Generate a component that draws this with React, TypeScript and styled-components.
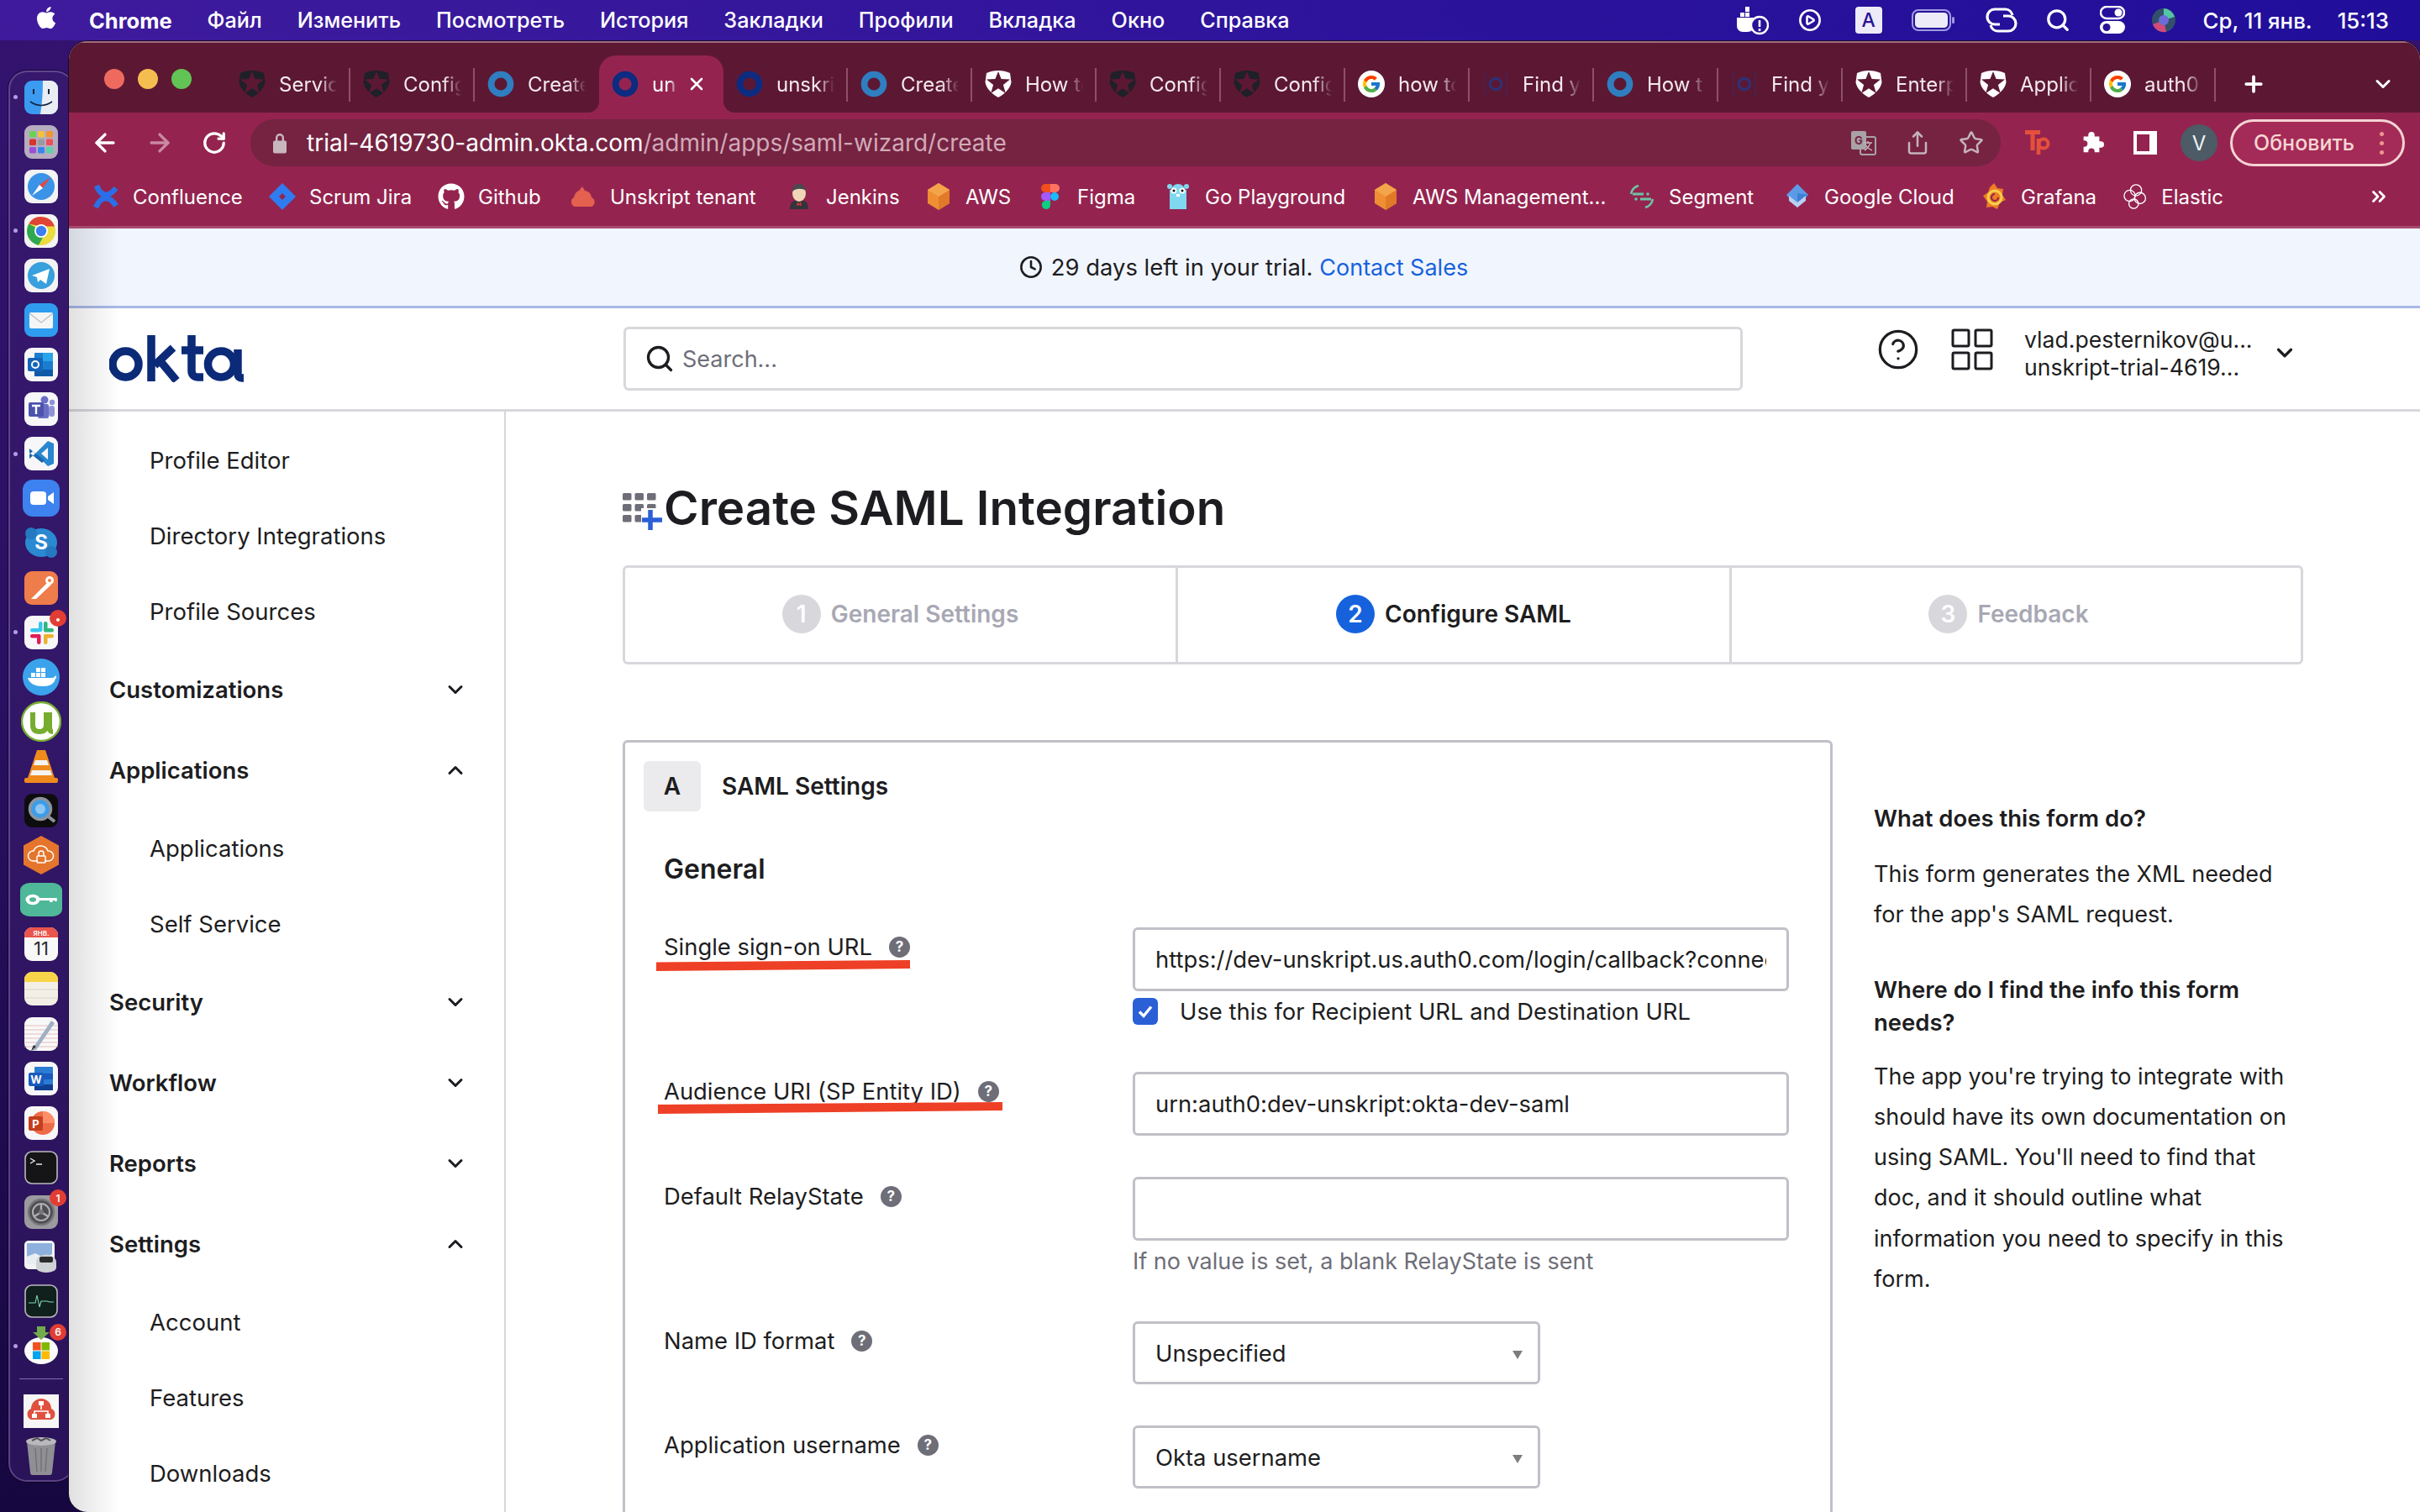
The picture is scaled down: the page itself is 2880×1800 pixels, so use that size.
import React from "react";
import styled, { createGlobalStyle } from "styled-components";
import { FaApple, FaGithub } from "react-icons/fa";
import { FcGoogle } from "react-icons/fc";
import {
  ArrowLeft,
  ArrowRight,
  RotateCw,
  Share,
  Star,
  ChevronDown,
  ChevronUp,
  ChevronsRight,
  Plus,
  X,
  Search,
  CirclePlay,
  HelpCircle,
  Clock,
} from "lucide-react";

const Global = createGlobalStyle`
  html, body { margin: 0; padding: 0; width: 2880px; height: 1800px; overflow: hidden; }
  body { font-family: Inter, "Noto Sans", sans-serif; color: #1d1d21; }
  * { box-sizing: border-box; }
`;

const UI = `Inter, "Noto Sans", sans-serif`;

const Page = styled.div`
  width: 2880px;
  height: 1800px;
  display: flex;
  flex-direction: column;
  overflow: hidden;
  background: linear-gradient(180deg, #33136f 0%, #2a1062 45%, #160740 100%);
`;

/* ---------- macOS menu bar ---------- */
const MenuBar = styled.header`
  height: 48px;
  flex: none;
  display: flex;
  align-items: center;
  padding-left: 40px;
  background: linear-gradient(90deg, #3f1b9c 0%, #2f149c 50%, #200e9a 100%);
  color: #fff;
  font-family: ${UI};
  font-size: 25.2px;
`;
const AppleSlot = styled.span`
  width: 66px;
  display: flex;
  font-size: 30px;
  margin-top: -6px;
`;
const MenuList = styled.nav`
  display: flex;
  gap: 42px;
`;
const MenuItem = styled.span<{ $bold?: boolean }>`
  font-weight: ${(p) => (p.$bold ? 700 : 500)};
  font-size: ${(p) => (p.$bold ? "25.5px" : "inherit")};
  white-space: nowrap;
`;
const StatusArea = styled.div`
  margin-left: auto;
  display: flex;
  align-items: center;
  padding-right: 37px;
`;
const StatusSlot = styled.span<{ $w: number }>`
  width: ${(p) => p.$w}px;
  display: flex;
  justify-content: center;
  align-items: center;
`;
const KeyboardBadge = styled.span`
  width: 32px;
  height: 32px;
  border-radius: 4px;
  background: #ecebf7;
  color: #2a1296;
  font-size: 23px;
  font-weight: 500;
  display: flex;
  align-items: center;
  justify-content: center;
`;
const DateText = styled.span`
  margin-left: 23px;
  font-weight: 500;
  font-size: 25.8px;
  white-space: nowrap;
  display: flex;
  gap: 30px;
`;

/* ---------- desktop ---------- */
const Desktop = styled.div`
  flex: 1;
  min-height: 0;
  display: flex;
`;

const DockRail = styled.aside`
  flex: none;
  width: 78px;
  margin: 36px -6px 36px 10px;
  padding-top: 3px;
  display: flex;
  flex-direction: column;
  align-items: center;
  background: rgba(58, 30, 110, 0.55);
  border: 2px solid rgba(150, 125, 190, 0.45);
  border-radius: 22px;
  box-shadow: 0 0 0 1px rgba(0, 0, 0, 0.5);
`;
const DockSlot = styled.div`
  position: relative;
  flex: 0 0 53.1px;
  width: 100%;
  display: flex;
  align-items: center;
  justify-content: center;
`;
const RunDot = styled.span`
  position: absolute;
  left: 4px;
  top: 24px;
  width: 5px;
  height: 5px;
  border-radius: 50%;
  background: #b39be6;
`;
const DockBadge = styled.span`
  position: absolute;
  right: 7px;
  top: 0;
  width: 20px;
  height: 20px;
  border-radius: 50%;
  background: #e13d33;
  color: #fff;
  font-size: 12px;
  font-weight: 600;
  display: flex;
  align-items: center;
  justify-content: center;
`;
const DockDivider = styled.hr`
  width: 52px;
  height: 1px;
  flex: none;
  border: 0;
  margin: 12px 0 12px;
  background: rgba(190, 170, 225, 0.6);
`;

const Window = styled.main`
  position: relative;
  z-index: 1;
  flex: 1;
  min-width: 0;
  display: flex;
  flex-direction: column;
  border-radius: 22px 22px 0 22px;
  overflow: hidden;
  margin-top: 1px;
  background: #fff;
  box-shadow: 0 0 0 1px #1a0a2a;
`;

/* ---------- tab strip ---------- */
const TabStrip = styled.div`
  flex: none;
  height: 85px;
  display: flex;
  align-items: flex-end;
  background: #5c1833;
  border-top: 2px solid #a06a80;
  color: #f4e9ec;
  font-family: ${UI};
`;
const Lights = styled.div`
  width: 187px;
  flex: none;
  align-self: flex-start;
  display: flex;
  gap: 16px;
  padding: 31px 0 0 42px;
`;
const Light = styled.span<{ $c: string }>`
  width: 24px;
  height: 24px;
  border-radius: 50%;
  background: ${(p) => p.$c};
`;
const TabSlot = styled.div<{ $active?: boolean }>`
  position: relative;
  flex: none;
  width: 148px;
  height: 68px;
  padding-left: 15px;
  display: flex;
  align-items: center;
  gap: 16px;
  font-size: 24px;
  color: ${(p) => (p.$active ? "#fff" : "#f4e9ec")};
  background: ${(p) => (p.$active ? "#94244f" : "transparent")};
  border-radius: ${(p) => (p.$active ? "20px 20px 0 0" : "0")};
  ${(p) =>
    p.$active
      ? `
    &::before, &::after {
      content: ""; position: absolute; bottom: 0; width: 14px; height: 14px;
    }
    &::before { left: -14px; background: radial-gradient(circle at 0 0, transparent 14px, #94244f 14.5px); }
    &::after { right: -14px; background: radial-gradient(circle at 100% 0, transparent 14px, #94244f 14.5px); }
  `
      : ""}
`;
const TabSep = styled.span`
  position: absolute;
  right: 0;
  top: 15px;
  bottom: 13px;
  width: 2px;
  background: #8d5068;
`;
const TabTitle = styled.span<{ $w: number }>`
  width: ${(p) => p.$w}px;
  overflow: hidden;
  white-space: nowrap;
  -webkit-mask-image: linear-gradient(90deg, #000 70%, transparent 100%);
  mask-image: linear-gradient(90deg, #000 70%, transparent 100%);
`;
const TabClose = styled.span`
  position: absolute;
  left: 104px;
  top: 22px;
  display: flex;
`;
const TabTrail = styled.div`
  flex: 1;
  height: 68px;
  display: flex;
  align-items: center;
  padding: 0 30px 0 30px;
  justify-content: space-between;
  color: #fff;
`;

/* ---------- toolbar ---------- */
const Toolbar = styled.div`
  flex: none;
  height: 71px;
  padding: 8px 17px 7px 10px;
  display: flex;
  align-items: center;
  background: #94244f;
  color: #fff;
`;
const NavSlot = styled.span<{ $dim?: boolean }>`
  flex: none;
  width: 65px;
  display: flex;
  justify-content: center;
  color: ${(p) => (p.$dim ? "#c98aa2" : "#fff")};
`;
const Omnibox = styled.div`
  flex: none;
  width: 2083px;
  height: 56px;
  margin-left: 11px;
  padding: 0 3px 0 25px;
  border-radius: 28px;
  background: #752341;
  display: flex;
  align-items: center;
  font-family: ${UI};
  font-size: 28px;
  white-space: nowrap;
`;
const UrlHost = styled.span`
  margin-left: 22px;
  color: #fff;
`;
const UrlPath = styled.span`
  color: #d1aab8;
`;
const OmniActions = styled.div`
  margin-left: auto;
  display: flex;
  color: #c5b3ba;
`;
const ActionSlot = styled.span<{ $c?: string }>`
  flex: none;
  width: 64px;
  display: flex;
  justify-content: center;
  align-items: center;
  color: ${(p) => p.$c || "inherit"};
`;
const ExtGroup = styled.div`
  margin-left: 12px;
  display: flex;
`;
const Avatar = styled.span`
  width: 44px;
  height: 44px;
  border-radius: 50%;
  background: #4c5b66;
  color: #eef2f4;
  font: 400 24px ${UI};
  display: flex;
  align-items: center;
  justify-content: center;
`;
const UpdateButton = styled.button`
  flex: none;
  width: 208px;
  height: 56px;
  margin-left: 5px;
  padding: 0 22px 0 25px;
  border: 3px solid #f5d3d3;
  border-radius: 28px;
  background: #a42b57;
  color: #f7d6d4;
  font: 500 25px ${UI};
  display: flex;
  align-items: center;
  justify-content: space-between;
`;
const KebabDots = styled.span`
  display: flex;
  flex-direction: column;
  gap: 6px;
  & > i {
    display: block;
    width: 5px;
    height: 5px;
    border-radius: 50%;
    background: #f0968f;
  }
`;

/* ---------- bookmarks ---------- */
const BookmarkBar = styled.div`
  flex: none;
  height: 67px;
  padding: 0 36px 6px 28px;
  display: flex;
  align-items: center;
  background: #94244f;
  border-bottom: 3px solid #a84a6e;
  color: #fff;
  font-family: ${UI};
  font-size: 24px;
`;
const Bookmark = styled.span<{ $w: number }>`
  flex: none;
  width: ${(p) => p.$w}px;
  display: flex;
  align-items: center;
  gap: 16px;
  white-space: nowrap;
`;
const BookmarkMore = styled.span`
  margin-left: auto;
  display: flex;
`;

/* ---------- page content ---------- */
const Content = styled.div`
  position: relative;
  flex: 1;
  min-height: 0;
  display: flex;
  flex-direction: column;
  &::after {
    content: "";
    position: absolute;
    inset: 0 auto 0 0;
    width: 60px;
    pointer-events: none;
    background: linear-gradient(90deg, rgba(0, 0, 0, 0.12), rgba(0, 0, 0, 0));
  }
`;
const TrialBanner = styled.div`
  flex: none;
  height: 95px;
  padding-right: 2px;
  display: flex;
  align-items: center;
  justify-content: center;
  gap: 8px;
  background: #f1f5fe;
  border-bottom: 3px solid #a8b8e8;
  font-size: 27.4px;
`;
const ClockSlot = styled.span`
  display: flex;
  margin-right: 2px;
`;
const ContactLink = styled.a`
  color: #1662dd;
  font-size: 27px;
`;
const TopHeader = styled.div`
  flex: none;
  height: 123px;
  display: flex;
  align-items: center;
  border-bottom: 3px solid #d7d7dc;
`;
const LogoSlot = styled.div`
  flex: none;
  width: 660px;
  padding-left: 48px;
  display: flex;
`;
const SearchBox = styled.div`
  flex: none;
  width: 1332px;
  height: 76px;
  padding-left: 22px;
  display: flex;
  align-items: center;
  gap: 9px;
  border: 3px solid #d7d7dc;
  border-radius: 6px;
  color: #6e6e78;
  font-size: 27px;
`;
const HeadIcons = styled.div`
  flex: none;
  margin: 0 0 22px 159px;
  width: 176px;
  display: flex;
  gap: 36px;
  color: #1d1d21;
`;
const UserBlock = styled.div`
  flex: none;
  width: 290px;
  font-size: 26.6px;
  line-height: 33px;
  white-space: nowrap;
  margin-bottom: 12px;
`;
const HeadCaret = styled.span`
  display: flex;
  margin: 0 0 14px 5px;
`;
const Body = styled.div`
  flex: 1;
  min-height: 0;
  display: flex;
`;
const Sidebar = styled.nav`
  flex: none;
  width: 520px;
  padding-top: 13px;
  border-right: 2px solid #d7d7dc;
  display: flex;
  flex-direction: column;
  overflow: hidden;
`;
const SubItem = styled.div`
  flex: none;
  height: 90px;
  padding-left: 96px;
  display: flex;
  align-items: center;
  font-size: 27.5px;
`;
const GroupItem = styled.div`
  flex: none;
  height: 96px;
  padding: 0 44px 0 48px;
  display: flex;
  align-items: center;
  justify-content: space-between;
  font-size: 27.5px;
  font-weight: 600;
`;
const MainPane = styled.div`
  flex: 1;
  min-width: 0;
  padding: 80px 0 0 139px;
  overflow: hidden;
`;
const PageTitle = styled.h1`
  margin: 0;
  height: 70px;
  display: flex;
  align-items: center;
  font-size: 56.5px;
  font-weight: 600;
  line-height: 70px;
  white-space: nowrap;
`;
const TitleIcon = styled.span`
  width: 49px;
  display: flex;
  margin-top: 12px;
`;
const Wizard = styled.div`
  width: 2000px;
  height: 118px;
  margin-top: 33px;
  display: flex;
  border: 3px solid #d7d7dc;
  border-radius: 6px;
`;
const WizardStep = styled.div<{ $w: number; $on?: boolean; $shift?: number }>`
  flex: none;
  width: ${(p) => p.$w}px;
  padding: 0 ${(p) => p.$shift || 0}px 2px 0;
  display: flex;
  align-items: center;
  justify-content: center;
  gap: 12px;
  font-size: 28px;
  font-weight: 600;
  color: ${(p) => (p.$on ? "#1d1d21" : "#a8a8b4")};
  &:not(:last-child) {
    border-right: 3px solid #d7d7dc;
  }
`;
const StepNum = styled.span<{ $on?: boolean }>`
  width: 46px;
  height: 46px;
  border-radius: 50%;
  background: ${(p) => (p.$on ? "#1662dd" : "#d7d7dc")};
  color: #fff;
  display: flex;
  align-items: center;
  justify-content: center;
`;
const Columns = styled.div`
  margin-top: 90px;
  display: flex;
  align-items: flex-start;
`;
const Card = styled.section`
  flex: none;
  width: 1440px;
  height: 1100px;
  padding: 22px 22px 0;
  border: 3px solid #c0c0c8;
  border-radius: 6px;
`;
const CardHead = styled.div`
  display: flex;
  align-items: center;
  gap: 25px;
  font-size: 28px;
  font-weight: 600;
`;
const CardLetter = styled.span`
  width: 68px;
  height: 60px;
  border-radius: 6px;
  background: #ebebed;
  display: flex;
  align-items: center;
  justify-content: center;
`;
const SectionTitle = styled.h2`
  margin: 49px 0 49px 24px;
  font-size: 32px;
  font-weight: 600;
  line-height: 40px;
`;
const FormGrid = styled.div`
  margin-left: 24px;
  display: grid;
  grid-template-columns: 558px 781px;
  row-gap: 49px;
  font-size: 27.4px;
`;
const LabelCell = styled.div`
  position: relative;
  height: 46px;
  display: flex;
  align-items: center;
  gap: 20px;
  white-space: nowrap;
`;
const HelpDot = styled.span`
  width: 25px;
  height: 25px;
  border-radius: 50%;
  background: #6e6e78;
  color: #fff;
  font-size: 17px;
  font-weight: 700;
  display: flex;
  align-items: center;
  justify-content: center;
`;
const RedMark = styled.svg<{ $l: number; $t: number }>`
  position: absolute;
  left: ${(p) => p.$l}px;
  top: ${(p) => p.$t}px;
`;
const FieldCell = styled.div`
  display: flex;
  flex-direction: column;
`;
const TextBox = styled.div`
  width: 781px;
  height: 76px;
  padding: 0 24px;
  border: 3px solid #c0c0c8;
  border-radius: 6px;
  display: flex;
  align-items: center;
  overflow: hidden;
  white-space: nowrap;
`;
const UrlClip = styled.span`
  width: 730px;
  overflow: hidden;
  white-space: nowrap;
`;
const CheckRow = styled.label`
  height: 46px;
  margin-top: 1px;
  display: flex;
  align-items: center;
  gap: 26px;
`;
const CheckMark = styled.span`
  width: 30px;
  height: 32px;
  border-radius: 6px;
  background: #2a5fd6;
  display: flex;
  align-items: center;
  justify-content: center;
`;
const Hint = styled.div`
  height: 46px;
  margin-top: 1px;
  display: flex;
  align-items: center;
  color: #6e6e78;
  font-size: 27px;
`;
const SelectBox = styled.div`
  width: 485px;
  height: 75px;
  padding: 0 18px 0 24px;
  border: 3px solid #c0c0c8;
  border-radius: 6px;
  display: flex;
  align-items: center;
  justify-content: space-between;
`;
const SelectArrow = styled.span`
  width: 0;
  height: 0;
  border-left: 6px solid transparent;
  border-right: 6px solid transparent;
  border-top: 10px solid #7d7d7d;
  margin-top: 4px;
`;
const HelpAside = styled.aside`
  flex: none;
  width: 520px;
  margin-left: 49px;
  padding-top: 74px;
  font-size: 27px;
`;
const HelpTitle = styled.h3<{ $gap: number }>`
  margin: ${(p) => p.$gap}px 0 0;
  font-size: 27.5px;
  font-weight: 600;
  line-height: 39px;
`;
const HelpText = styled.p<{ $gap: number }>`
  margin: ${(p) => p.$gap}px 0 0;
  line-height: 48.1px;
`;

/* ---------- brand drawings ---------- */
const Auth0 = ({ fg, star }: { fg: string; star: string }) => (
  <svg width="32" height="32" viewBox="0 0 32 32">
    <path d="M16 0c5 0 10 1 14 3l1.5 11C30 22 23 28 16 32 9 28 2 22 .5 14L2 3c4-2 9-3 14-3z" fill={fg} />
    <polygon
      points="16,1 19.6,10 30,10.4 21.9,16.9 24.8,27 16,21.2 7.2,27 10.1,16.9 2,10.4 12.4,10"
      fill={star}
    />
  </svg>
);
const OktaRing = ({ c, faint }: { c: string; faint?: boolean }) => (
  <svg width="32" height="32" viewBox="0 0 24 24" opacity={faint ? 0.75 : 1}>
    <circle cx="12" cy="12" r={faint ? 5 : 8.6} fill="none" stroke={c} strokeWidth={faint ? 2.5 : 5.8} />
    {faint && <path d="M4 2h-2v20h2M20 2h2v20h-2" fill="none" stroke={c} strokeWidth="1" opacity=".5" />}
  </svg>
);
const GoogleFav = () => (
  <svg width="32" height="32" viewBox="0 0 32 32">
    <circle cx="16" cy="16" r="16" fill="#fff" />
    <FcGoogle x={4} y={4} size={24} />
  </svg>
);
const OktaLogo = () => (
  <svg width="160" height="56" viewBox="0 0 160 56" fill="none" stroke="#0b2a78" strokeWidth="9.5">
    <circle cx="19.5" cy="34.5" r="15.5" />
    <path d="M50 0v55M54 36 76 15M60 30 80 54" />
    <path d="M98 0v42q0 8 8 8h6M86 18h26" />
    <circle cx="133" cy="34.5" r="15.5" />
    <path d="M153 17v29q0 5 5 5h2" />
  </svg>
);
const TitleGlyph = () => (
  <svg width="48" height="48" viewBox="0 0 48 48">
    <g fill="#6e6e78">
      {[0, 14.5, 29].map((x) =>
        [0, 13, 26].map((y) => <rect key={`${x}-${y}`} x={x} y={y} width="10.5" height="8.5" rx="1.5" />)
      )}
    </g>
    <rect x="22" y="18" width="30" height="30" fill="#fff" />
    <path d="M33 20v24M23 32h24" stroke="#2a5fd6" strokeWidth="5.5" />
  </svg>
);

const sq = "0 0 40 40";
const Tile = ({ bg, children }: { bg: string; children?: React.ReactNode }) => (
  <>
    <rect width="40" height="40" rx="9" fill={bg} />
    {children}
  </>
);
const S: React.FC<{ w?: number; children: React.ReactNode }> = ({ w = 40, children }) => (
  <svg width={w} height="40" viewBox={sq} preserveAspectRatio="none">
    {children}
  </svg>
);

const dockItems: { key: string; dot?: boolean; badge?: string; art: React.ReactNode }[] = [
  { key: "finder", dot: true, art: (
    <S><Tile bg="#3a9bf0" /><path d="M22 0h9a9 9 0 0 1 9 9v22a9 9 0 0 1-9 9H19q3-18 3-40z" fill="#e9eef5" /><path d="M7 25q13 9 26 0" stroke="#13253f" strokeWidth="1.6" fill="none" /><path d="M11 10v6M29 10v6" stroke="#13253f" strokeWidth="2" /></S>
  )},
  { key: "launchpad", art: (
    <S><Tile bg="#b7acc0" />{["#69d354","#f4c23c","#f39433","#d8352a","#9b9b9f","#ec4f5a","#9a50d6","#3a84f0","#5ed2a8"].map((c, i) => <rect key={c} x={6 + (i % 3) * 10} y={7 + Math.floor(i / 3) * 9.5} width="8" height="7.5" rx="1.5" fill={c} />)}</S>
  )},
  { key: "safari", art: (
    <S><Tile bg="#f3f3f5" /><circle cx="20" cy="20" r="16" fill="#3b93e8" /><path d="M31 9 22 22 18 18z" fill="#e9463a" /><path d="M9 31l9-13 4 4z" fill="#fff" /></S>
  )},
  { key: "chrome", dot: true, art: (
    <S><Tile bg="#f3f3f5" /><circle cx="20" cy="20" r="17" fill="#eadb3f" /><path d="M5.3 11.5A17 17 0 0 1 36 14.5H20z" fill="#df4437" /><path d="M5.3 11.5A17 17 0 0 0 17 36.7L25 22z" fill="#2fa84f" /><circle cx="20" cy="20" r="8" fill="#fff" /><circle cx="20" cy="20" r="6.2" fill="#3d7ff0" /></S>
  )},
  { key: "telegram", art: (
    <S><Tile bg="#f3f3f5" /><circle cx="20" cy="20" r="16" fill="#38a0dc" /><path d="M9 20 30 12l-4 18-7-5-3 3-1-6z" fill="#fff" /></S>
  )},
  { key: "mail", art: (
    <S><Tile bg="#2f9cf0" /><rect x="6" y="11" width="28" height="19" rx="2" fill="#f5f5f5" /><path d="M6 12l14 11 14-11" stroke="#bcbcc2" strokeWidth="1.2" fill="none" /></S>
  )},
  { key: "outlook", art: (
    <S><Tile bg="#f7f7f9" /><rect x="12" y="6" width="22" height="28" rx="1" fill="#1a7dd0" /><path d="M22 6h12v10H22z" fill="#2aa3e8" /><path d="M12 26h22v8H12z" fill="#0e5aa8" /><rect x="4" y="12" width="18" height="16" rx="2" fill="#1464ba" /><circle cx="13" cy="20" r="4" fill="none" stroke="#fff" strokeWidth="2" /></S>
  )},
  { key: "teams", art: (
    <S><Tile bg="#f7f7f9" /><circle cx="24" cy="9" r="4.5" fill="#6a6fc5" /><circle cx="33" cy="12" r="3.2" fill="#8f93d6" /><rect x="16" y="14" width="13" height="17" rx="2" fill="#6a6fc5" /><rect x="29" y="16" width="7" height="13" rx="3" fill="#8f93d6" /><rect x="5" y="12" width="18" height="17" rx="2" fill="#4b53ad" /><path d="M9 16h10M14 16v10" stroke="#fff" strokeWidth="2.4" /></S>
  )},
  { key: "vscode", dot: true, art: (
    <S><Tile bg="#f7f7f9" /><path d="M28 5 13 20l15 15 7-3V8z" fill="#2a86d0" /><path d="M28 13 20 20l8 7z" fill="#f7f7f9" /><path d="M6 14l18 14-3 3-15-12zM6 26l7-6-3-3-4 4z" fill="#1a68ad" /></S>
  )},
  { key: "zoom", art: (
    <svg width="44" height="44" viewBox="0 0 44 44"><rect width="44" height="44" rx="12" fill="#3d82ef" /><rect x="9" y="14" width="19" height="16" rx="4" fill="#fff" /><path d="M30 20l7-5v14l-7-5z" fill="#fff" /></svg>
  )},
  { key: "skype", art: (
    <S><ellipse cx="20" cy="20" rx="19" ry="17" fill="#2a89d1" /><circle cx="8" cy="9" r="7" fill="#2479c0" /><circle cx="32" cy="31" r="7" fill="#2479c0" /><text x="20" y="28" fontSize="24" fontWeight="700" fill="#fff" textAnchor="middle" fontFamily="Inter, sans-serif">S</text></S>
  )},
  { key: "postman", art: (
    <S><Tile bg="#ef7c4b" /><path d="M8 33 28 13l4 3-18 17z" fill="#fff" /><circle cx="30" cy="11" r="5" fill="#fff" /><circle cx="30" cy="11" r="2" fill="#ef7c4b" /></S>
  )},
  { key: "slack", dot: true, badge: "•", art: (
    <S><Tile bg="#f7f7f9" /><rect x="7" y="15" width="12" height="4.5" rx="2.2" fill="#36c5f0" /><rect x="17" y="7" width="4.5" height="12" rx="2.2" fill="#36c5f0" /><rect x="23" y="7" width="4.5" height="12" rx="2.2" fill="#2eb67d" /><rect x="23" y="15" width="12" height="4.5" rx="2.2" fill="#2eb67d" /><rect x="23" y="22" width="12" height="4.5" rx="2.2" fill="#ecb22e" /><rect x="23" y="22" width="4.5" height="12" rx="2.2" fill="#ecb22e" /><rect x="7" y="22" width="12" height="4.5" rx="2.2" fill="#e01e5a" /><rect x="15" y="22" width="4.5" height="12" rx="2.2" fill="#e01e5a" /></S>
  )},
  { key: "docker", art: (
    <svg width="44" height="44" viewBox="0 0 44 44"><circle cx="22" cy="22" r="22" fill="#3aa3ec" /><path d="M6 23h29q3 0 4-3 2 2 0 4-2 9-15 9Q9 33 6 23z" fill="#fff" /><path d="M10 17h5v5h-5zM16 17h5v5h-5zM22 17h5v5h-5zM16 11h5v5h-5zM22 11h5v5h-5z" fill="#fff" /></svg>
  )},
  { key: "utorrent", art: (
    <svg width="48" height="48" viewBox="0 0 48 48"><circle cx="24" cy="24" r="23" fill="#fff" stroke="#76ad2f" strokeWidth="2.4" /><path d="M14 13v15q0 8 8 8t8-8V13M34 13v19q0 4 4 4" fill="none" stroke="#76ad2f" strokeWidth="6" /></svg>
  )},
  { key: "vlc", art: (
    <svg width="42" height="42" viewBox="0 0 42 42"><path d="M16 2h10l12 36H4z" fill="#ef8a1d" /><path d="M14 14h14l2 6H12zM10 26h22l2 6H8z" fill="#f4f4f4" /><rect x="1" y="35" width="40" height="6" rx="2" fill="#ef8a1d" /></svg>
  )},
  { key: "quicktime", art: (
    <S><Tile bg="#0d0d0f" /><circle cx="19" cy="18" r="12.5" fill="#3d9de8" stroke="#8f949c" strokeWidth="3.5" /><circle cx="19" cy="18" r="6" fill="#8ec7f2" /><path d="M27 26l9 7" stroke="#8f949c" strokeWidth="4" /></S>
  )},
  { key: "hex", art: (
    <svg width="46" height="46" viewBox="0 0 46 46"><path d="M23 0 44 11.5v23L23 46 2 34.5v-23z" fill="#e5752c" /><path d="M13 30a6 6 0 0 1 1-12 9 9 0 0 1 17 0 6 6 0 0 1 1 12h-5M19 30h-6" fill="none" stroke="#fff" strokeWidth="1.5" /><rect x="18" y="24" width="10" height="8" rx="1" fill="none" stroke="#fff" strokeWidth="1.5" /><path d="M20 24v-3a3 3 0 0 1 6 0v3" fill="none" stroke="#fff" strokeWidth="1.5" /></svg>
  )},
  { key: "key", art: (
    <S w={50}><rect width="40" height="40" rx="9" fill="#4fb898" /><ellipse cx="12" cy="20" rx="5" ry="4.5" fill="none" stroke="#fff" strokeWidth="3.6" /><path d="M17 18h18v4h-2v-1h-2v2h-3v-2H17z" fill="#fff" /></S>
  )},
  { key: "calendar", art: (
    <S><Tile bg="#f8f8f8" /><path d="M9 0h22a9 9 0 0 1 9 9v3H0V9a9 9 0 0 1 9-9z" fill="#e9544c" /><text x="20" y="9.5" fontSize="8" fontWeight="600" fill="#fff" textAnchor="middle" fontFamily="Inter, sans-serif">ЯНВ.</text><text x="20" y="33" fontSize="22" fill="#2a2a2e" textAnchor="middle" fontFamily="Inter, sans-serif">11</text></S>
  )},
  { key: "notes", art: (
    <S><Tile bg="#f3efe6" /><path d="M9 0h22a9 9 0 0 1 9 9v3H0V9a9 9 0 0 1 9-9z" fill="#f8d548" /><path d="M0 21h40M0 31h40" stroke="#d9d5cb" strokeWidth="1" /></S>
  )},
  { key: "textedit", art: (
    <S><Tile bg="#f8f8f8" /><path d="M0 10h40M0 15h40M0 20h40M0 25h40M0 30h40M0 35h40" stroke="#e1a5a5" strokeWidth=".7" /><path d="M8 40 32 4l4 3-22 32z" fill="#9fb1c4" /><path d="M8 40l3-7 3 2z" fill="#333" /></S>
  )},
  { key: "word", art: (
    <S><Tile bg="#f7f7f9" /><rect x="12" y="6" width="22" height="28" rx="1" fill="#2b7cd3" /><path d="M12 14h22v7H12z" fill="#185abd" /><path d="M12 27h22v7H12z" fill="#103f91" /><rect x="5" y="13" width="18" height="16" rx="2" fill="#185abd" /><text x="14" y="26" fontSize="13" fontWeight="700" fill="#fff" textAnchor="middle" fontFamily="Inter, sans-serif">W</text></S>
  )},
  { key: "ppt", art: (
    <S><Tile bg="#f7f7f9" /><circle cx="22" cy="20" r="14" fill="#ed6c47" /><path d="M22 6a14 14 0 0 1 14 14H22z" fill="#ff8f6b" /><rect x="5" y="12" width="17" height="17" rx="2" fill="#c43e1c" /><text x="13.5" y="25.5" fontSize="13" fontWeight="700" fill="#fff" textAnchor="middle" fontFamily="Inter, sans-serif">P</text></S>
  )},
  { key: "terminal", art: (
    <S><rect x="1" y="1" width="38" height="38" rx="8" fill="#151517" stroke="#b9b9bd" strokeWidth="1.6" /><path d="M7 9l5 3-5 3M14 16h7" stroke="#e8e8e8" strokeWidth="1.4" fill="none" /></S>
  )},
  { key: "settings", badge: "1", art: (
    <S><Tile bg="#9b9b9f" /><circle cx="20" cy="20" r="15" fill="#4d4d52" stroke="#77777c" strokeWidth="2.5" /><circle cx="20" cy="20" r="10" fill="none" stroke="#b0b0b4" strokeWidth="2" /><path d="M20 20v-9M20 20l8 5M20 20l-8 5" stroke="#b0b0b4" strokeWidth="2.4" /><circle cx="20" cy="20" r="3" fill="#77777c" /></S>
  )},
  { key: "preview", art: (
    <S><rect x="0" y="1" width="36" height="34" rx="5" fill="#f3f3f5" /><path d="M3 4h30v16H3z" fill="#8eb0dd" /><path d="M3 20l10-4 10 5 10-4v12H3z" fill="#e9eef2" /><path d="M14 27a10 8 0 0 1 24 0v6a12 6 0 0 1-24 0z" fill="#cfd2d4" /><rect x="18" y="20" width="16" height="7" rx="2" fill="#2b2b2e" /></S>
  )},
  { key: "activity", art: (
    <S><rect x="1" y="1" width="38" height="38" rx="8" fill="#10201c" stroke="#b9b9bd" strokeWidth="1.6" /><path d="M5 22h8l2-9 3 14 2-7h7l3 1h5" stroke="#7fd8b4" strokeWidth="1.1" fill="none" /></S>
  )},
  { key: "msupdate", dot: true, badge: "6", art: (
    <svg width="42" height="46" viewBox="0 0 42 46"><ellipse cx="21" cy="29" rx="20" ry="16" fill="#fbfbfb" /><path d="M16 0h10v7h5L21 16 11 7h5z" fill="#71ab4a" /><rect x="11" y="19" width="9.5" height="9.5" fill="#f25022" /><rect x="21.5" y="19" width="9.5" height="9.5" fill="#7fba00" /><rect x="11" y="29.5" width="9.5" height="9.5" fill="#00a4ef" /><rect x="21.5" y="29.5" width="9.5" height="9.5" fill="#ffb900" /></svg>
  )},
];
const dockTail: { key: string; art: React.ReactNode }[] = [
  { key: "downloads", art: (
    <svg width="42" height="42" viewBox="0 0 42 42"><rect y="1" width="42" height="40" fill="#f6f6f6" /><path d="M9 31a7 7 0 0 1 0-13 12 12 0 0 1 24 0 7 7 0 0 1 0 13z" fill="#e0503f" /><path d="M21 12v7M13 25v-4h16v4" fill="none" stroke="#fff" strokeWidth="1.6" /><rect x="18" y="9" width="6" height="5" fill="#fff" /><rect x="10" y="24" width="6" height="5" fill="#fff" /><rect x="26" y="24" width="6" height="5" fill="#fff" /></svg>
  )},
  { key: "trash", art: (
    <svg width="38" height="46" viewBox="0 0 38 46"><path d="M2 6h34l-4 37a3 3 0 0 1-3 3H9a3 3 0 0 1-3-3z" fill="#8f8f94" /><ellipse cx="19" cy="6" rx="18" ry="5" fill="#b9b9bd" /><path d="M8 5l6-3 5 3 6-3 5 3" stroke="#55555a" strokeWidth="2" fill="none" /><path d="M12 14l2 28M19 14v28M26 14l-2 28" stroke="#6d6d72" strokeWidth="1.2" /></svg>
  )},
];

const auth0Dark = <Auth0 fg="#1f2028" star="#5c1833" />;
const auth0Light = <Auth0 fg="#fff" star="#5c1833" />;
const tabs: { t: string; icon: React.ReactNode; active?: boolean }[] = [
  { t: "Servic", icon: auth0Dark },
  { t: "Config", icon: auth0Dark },
  { t: "Create", icon: <OktaRing c="#2f7ec0" /> },
  { t: "un", icon: <OktaRing c="#0d2b80" />, active: true },
  { t: "unskri", icon: <OktaRing c="#0d2b80" /> },
  { t: "Create", icon: <OktaRing c="#2f7ec0" /> },
  { t: "How to", icon: auth0Light },
  { t: "Config", icon: auth0Dark },
  { t: "Config", icon: auth0Dark },
  { t: "how to", icon: <GoogleFav /> },
  { t: "Find y", icon: <OktaRing c="#1f3a8a" faint /> },
  { t: "How t", icon: <OktaRing c="#2f7ec0" /> },
  { t: "Find y", icon: <OktaRing c="#1f3a8a" faint /> },
  { t: "Enterp", icon: auth0Light },
  { t: "Applic", icon: auth0Light },
  { t: "auth0", icon: <GoogleFav /> },
];

const box = (children: React.ReactNode) => (
  <svg width="32" height="32" viewBox="0 0 32 32">
    {children}
  </svg>
);
const AwsCube = box(
  <>
    <path d="M16 0l13 8v16l-13 8-13-8V8z" fill="#ef8e33" />
    <path d="M16 16l13-8v16l-13 8z" fill="#e07a28" />
    <path d="M16 0l13 8-13 8-13-8z" fill="#f4a44a" />
  </>
);
const bookmarks: { t: string; w: number; icon: React.ReactNode }[] = [
  { t: "Confluence", w: 210, icon: box(<path d="M5 3c3 8 7 11 11 11s8-3 12-8M4 29c3-7 7-11 12-11s9 4 12 9" fill="none" stroke="#2a6fe8" strokeWidth="6.5" />) },
  { t: "Scrum Jira", w: 201, icon: box(<><path d="M16 0l16 16-16 16L0 16z" fill="#2f7cf0" /><path d="M16 12l4 4-4 4-4-4z" fill="#94244f" /></>) },
  { t: "Github", w: 157, icon: <FaGithub size={32} /> },
  { t: "Unskript tenant", w: 257, icon: box(<path d="M6 28a6 6 0 0 1-1-11 10 10 0 0 1 6-8l4-5 3 5a9 9 0 0 1 8 8 6 6 0 0 1 0 11z" fill="#e4604f" />) },
  { t: "Jenkins", w: 166, icon: box(<><path d="M5 31c0-7 3-9 5-10l12 0c3 1 5 4 5 10z" fill="#34343c" /><path d="M14 22l2 3 2-3 1 5-3-1-3 1z" fill="#d33833" /><ellipse cx="16" cy="12" rx="8" ry="10" fill="#f0d6b7" /><path d="M8 10c0-7 4-9 8-9s8 3 8 8c-4-3-12-3-16 1z" fill="#49494f" /></>) },
  { t: "AWS", w: 133, icon: AwsCube },
  { t: "Figma", w: 152, icon: box(<><path d="M10 1h6v10h-6a5 5 0 0 1 0-10z" fill="#f24e1e" /><path d="M16 1h6a5 5 0 0 1 0 10h-6z" fill="#ff7262" /><path d="M10 11h6v10h-6a5 5 0 0 1 0-10z" fill="#a259ff" /><circle cx="21" cy="16" r="5" fill="#1abcfe" /><path d="M10 21h6v5a5 5 0 1 1-6-5z" fill="#0acf83" /></>) },
  { t: "Go Playground", w: 247, icon: box(<><path d="M6 31V8h20v23z" fill="#7fd8ef" /><circle cx="16" cy="9" r="8" fill="#7fd8ef" /><circle cx="6" cy="4" r="3" fill="#7fd8ef" /><circle cx="26" cy="4" r="3" fill="#7fd8ef" /><circle cx="11" cy="9" r="3.5" fill="#fff" /><circle cx="21" cy="9" r="3.5" fill="#fff" /><circle cx="11" cy="9" r="1.5" fill="#111" /><circle cx="21" cy="9" r="1.5" fill="#111" /><rect x="14" y="13" width="4" height="3" fill="#fff" /></>) },
  { t: "AWS Management...", w: 305, icon: AwsCube },
  { t: "Segment", w: 185, icon: box(<><path d="M12 3a13 13 0 0 0-9 10M20 29a13 13 0 0 0 9-10" fill="none" stroke="#6cc5a3" strokeWidth="2.5" /><path d="M5 13h13M14 19h13" stroke="#6cc5a3" strokeWidth="3" /><circle cx="23" cy="13" r="1.8" fill="#6cc5a3" /><circle cx="9" cy="19" r="1.8" fill="#6cc5a3" /></>) },
  { t: "Google Cloud", w: 234, icon: box(<><path d="M16 1l13 13-13 15L3 14z" fill="#5c9ae8" /><path d="M16 12l13 2-13 15z" fill="#3f7fd6" /><path d="M6 15l10 8 10-8v6l-10 8-10-8z" fill="#b9d0f2" /></>) },
  { t: "Grafana", w: 169, icon: box(<><path d="M16 0l4 6 7 1-1 7 4 6-7 3-3 8-6-3-7 1 1-7-5-7 6-4 2-6z" fill="#ee7d23" /><circle cx="17" cy="17" r="8" fill="none" stroke="#f8d04c" strokeWidth="3" /><path d="M17 13a4 4 0 1 0 4 4" fill="none" stroke="#94244f" strokeWidth="2.2" /></>) },
  { t: "Elastic", w: 120, icon: box(<g fill="none" stroke="#fff" strokeWidth="1.4"><circle cx="17" cy="8" r="7" /><circle cx="9" cy="15" r="7" /><circle cx="22" cy="18" r="7" /><circle cx="14" cy="25" r="6" /></g>) },
];

const Tick = () => (
  <svg width="22" height="22" viewBox="0 0 22 22" fill="none" stroke="#fff" strokeWidth="3.4">
    <path d="M4 11.5l5 5L18 5.5" />
  </svg>
);

export default function App() {
  return (
    <>
      <Global />
      <Page>
        <MenuBar>
          <AppleSlot>
            <FaApple />
          </AppleSlot>
          <MenuList>
            <MenuItem $bold>Chrome</MenuItem>
            {["Файл", "Изменить", "Посмотреть", "История", "Закладки", "Профили", "Вкладка", "Окно", "Справка"].map((m) => (
              <MenuItem key={m}>{m}</MenuItem>
            ))}
          </MenuList>
          <StatusArea>
            <StatusSlot $w={68}>
              <svg width="40" height="38" viewBox="0 0 40 38" fill="#fff">
                <path d="M2 16h22v8a9 9 0 0 1-9 9H9a7 7 0 0 1-7-7z" />
                <path d="M6 10h5v5H6zM12 10h5v5h-5zM12 3h5v6h-5z" />
                <circle cx="29" cy="25" r="10" fill="#2a1296" stroke="#fff" strokeWidth="2.4" />
                <path d="M29 19v8M29 29v3" stroke="#fff" strokeWidth="2.6" />
              </svg>
            </StatusSlot>
            <StatusSlot $w={70}>
              <CirclePlay size={28} strokeWidth={2.2} />
            </StatusSlot>
            <StatusSlot $w={70}>
              <KeyboardBadge>A</KeyboardBadge>
            </StatusSlot>
            <StatusSlot $w={84}>
              <svg width="52" height="26" viewBox="0 0 52 26">
                <rect x="1" y="1" width="45" height="24" rx="7" fill="none" stroke="#9f9be0" strokeWidth="2" />
                <rect x="4" y="4" width="39" height="18" rx="4.5" fill="#ecebf7" />
                <rect x="48" y="9" width="3" height="8" rx="1.5" fill="#9f9be0" />
              </svg>
            </StatusSlot>
            <StatusSlot $w={78}>
              <svg width="38" height="32" viewBox="0 0 38 32" fill="none" stroke="#fff" strokeWidth="3.2">
                <path d="M17 21H11a9 9 0 0 1 0-18h12a9 9 0 0 1 9 7" />
                <path d="M21 11h6a9 9 0 0 1 0 18H15a9 9 0 0 1-9-7" />
              </svg>
            </StatusSlot>
            <StatusSlot $w={56}>
              <Search size={30} strokeWidth={2.6} />
            </StatusSlot>
            <StatusSlot $w={74}>
              <svg width="30" height="34" viewBox="0 0 30 34">
                <rect x="1" y="1" width="28" height="14" rx="7" fill="none" stroke="#fff" strokeWidth="2.4" />
                <circle cx="22" cy="8" r="4.5" fill="#fff" />
                <rect x="0" y="18" width="30" height="15" rx="7.5" fill="#fff" />
                <circle cx="8" cy="25.5" r="4.5" fill="#2a1296" />
              </svg>
            </StatusSlot>
            <StatusSlot $w={48}>
              <svg width="28" height="30" viewBox="0 0 28 30">
                <circle cx="14" cy="15" r="14" fill="#33506a" />
                <path d="M14 1a14 14 0 0 1 13 10L14 15z" fill="#54c5a6" />
                <path d="M1 20 14 15l3 14a14 14 0 0 1-16-9z" fill="#d24a7a" />
                <circle cx="14" cy="15" r="6" fill="#6c6cd8" />
              </svg>
            </StatusSlot>
            <DateText>
              <span>Ср, 11 янв.</span>
              <span>15:13</span>
            </DateText>
          </StatusArea>
        </MenuBar>

        <Desktop>
          <DockRail>
            {dockItems.map((d) => (
              <DockSlot key={d.key}>
                {d.dot && <RunDot />}
                {d.art}
                {d.badge && <DockBadge>{d.badge}</DockBadge>}
              </DockSlot>
            ))}
            <DockDivider />
            {dockTail.map((d) => (
              <DockSlot key={d.key}>{d.art}</DockSlot>
            ))}
          </DockRail>

          <Window>
            <TabStrip>
              <Lights>
                <Light $c="#ee6a5f" />
                <Light $c="#f5bd4f" />
                <Light $c="#61c454" />
              </Lights>
              {tabs.map((tab, i) => {
                const beforeActive = tabs[i + 1]?.active;
                return (
                  <TabSlot key={i} $active={tab.active}>
                    {tab.icon}
                    <TabTitle $w={tab.active ? 30 : 69}>{tab.t}</TabTitle>
                    {tab.active && (
                      <TabClose>
                        <X size={24} strokeWidth={2.6} />
                      </TabClose>
                    )}
                    {!tab.active && !beforeActive && <TabSep />}
                  </TabSlot>
                );
              })}
              <TabTrail>
                <Plus size={30} strokeWidth={3} />
                <ChevronDown size={28} strokeWidth={2.6} />
              </TabTrail>
            </TabStrip>

            <Toolbar>
              <NavSlot>
                <ArrowLeft size={34} strokeWidth={2.4} />
              </NavSlot>
              <NavSlot $dim>
                <ArrowRight size={34} strokeWidth={2.4} />
              </NavSlot>
              <NavSlot>
                <RotateCw size={30} strokeWidth={2.6} />
              </NavSlot>
              <Omnibox>
                <svg width="20" height="26" viewBox="0 0 20 26" fill="#c8b7bd">
                  <path d="M5 11V7a5 5 0 0 1 10 0v4h-2.4V7a2.6 2.6 0 0 0-5.2 0v4z" />
                  <rect x="2" y="10.5" width="16" height="15" rx="2" />
                </svg>
                <UrlHost>trial-4619730-admin.okta.com</UrlHost>
                <UrlPath>/admin/apps/saml-wizard/create</UrlPath>
                <OmniActions>
                  <ActionSlot>
                    <svg width="30" height="30" viewBox="0 0 30 30">
                      <rect x="0" y="1" width="18" height="22" rx="2" fill="#a9a2a6" />
                      <rect x="11" y="8" width="18" height="21" rx="2" fill="none" stroke="#a9a2a6" strokeWidth="2" />
                      <text x="9" y="17" fontSize="13" fontWeight="700" textAnchor="middle" fill="#752341" fontFamily="Inter, sans-serif">G</text>
                      <path d="M15 15h10M20 13v3M23 15q-3 7-7 9M17 17q3 5 8 7" stroke="#c5b3ba" strokeWidth="1.4" fill="none" />
                    </svg>
                  </ActionSlot>
                  <ActionSlot>
                    <Share size={30} strokeWidth={2} />
                  </ActionSlot>
                  <ActionSlot>
                    <Star size={30} strokeWidth={2} />
                  </ActionSlot>
                </OmniActions>
              </Omnibox>
              <ExtGroup>
                <ActionSlot>
                  <svg width="30" height="30" viewBox="0 0 30 30" fill="none" stroke="#e5503c">
                    <path d="M0 2.5h18M9 2v22" strokeWidth="5" />
                    <path d="M16 10v19" strokeWidth="4.6" />
                    <circle cx="22" cy="16" r="5.5" strokeWidth="4" />
                  </svg>
                </ActionSlot>
                <ActionSlot $c="#fff">
                  <svg width="30" height="30" viewBox="0 0 32 32" fill="#fff">
                    <path d="M6 8h6V6a4 4 0 0 1 8 0v2h6v6h2a4 4 0 0 1 0 8h-2v6h-6v-1a4 4 0 0 0-8 0v1H6v-7h1a4 4 0 0 0 0-8H6z" />
                  </svg>
                </ActionSlot>
                <ActionSlot>
                  <svg width="28" height="28" viewBox="0 0 28 28" fill="#fff">
                    <path d="M0 0h28v28H0zM4 4v20h15V4z" fillRule="evenodd" />
                  </svg>
                </ActionSlot>
                <ActionSlot>
                  <Avatar>V</Avatar>
                </ActionSlot>
              </ExtGroup>
              <UpdateButton>
                Обновить
                <KebabDots>
                  <i />
                  <i />
                  <i />
                </KebabDots>
              </UpdateButton>
            </Toolbar>

            <BookmarkBar>
              {bookmarks.map((b) => (
                <Bookmark key={b.t} $w={b.w}>
                  {b.icon}
                  {b.t}
                </Bookmark>
              ))}
              <BookmarkMore>
                <ChevronsRight size={26} strokeWidth={2.6} />
              </BookmarkMore>
            </BookmarkBar>

            <Content>
              <TrialBanner>
                <ClockSlot>
                  <Clock size={28} strokeWidth={2.2} />
                </ClockSlot>
                <span>29 days left in your trial.</span>
                <ContactLink>Contact Sales</ContactLink>
              </TrialBanner>
              <TopHeader>
                <LogoSlot>
                  <OktaLogo />
                </LogoSlot>
                <SearchBox>
                  <Search size={36} strokeWidth={2.2} color="#1d1d21" />
                  Search...
                </SearchBox>
                <HeadIcons>
                  <HelpCircle size={52} strokeWidth={1.5} />
                  <svg width="52" height="52" viewBox="0 0 52 52" fill="none" stroke="#1d1d21" strokeWidth="3">
                    <rect x="3" y="3" width="19" height="19" rx="1.5" />
                    <rect x="30" y="3" width="19" height="19" rx="1.5" />
                    <rect x="3" y="30" width="19" height="19" rx="1.5" />
                    <rect x="30" y="30" width="19" height="19" rx="1.5" />
                  </svg>
                </HeadIcons>
                <UserBlock>
                  vlad.pesternikov@u...
                  <br />
                  unskript-trial-4619...
                </UserBlock>
                <HeadCaret>
                  <ChevronDown size={30} strokeWidth={2.6} />
                </HeadCaret>
              </TopHeader>
              <Body>
                <Sidebar>
                  <SubItem>Profile Editor</SubItem>
                  <SubItem>Directory Integrations</SubItem>
                  <SubItem>Profile Sources</SubItem>
                  <GroupItem>
                    Customizations
                    <ChevronDown size={28} strokeWidth={2.6} />
                  </GroupItem>
                  <GroupItem>
                    Applications
                    <ChevronUp size={28} strokeWidth={2.6} />
                  </GroupItem>
                  <SubItem>Applications</SubItem>
                  <SubItem>Self Service</SubItem>
                  <GroupItem>
                    Security
                    <ChevronDown size={28} strokeWidth={2.6} />
                  </GroupItem>
                  <GroupItem>
                    Workflow
                    <ChevronDown size={28} strokeWidth={2.6} />
                  </GroupItem>
                  <GroupItem>
                    Reports
                    <ChevronDown size={28} strokeWidth={2.6} />
                  </GroupItem>
                  <GroupItem>
                    Settings
                    <ChevronUp size={28} strokeWidth={2.6} />
                  </GroupItem>
                  <SubItem>Account</SubItem>
                  <SubItem>Features</SubItem>
                  <SubItem>Downloads</SubItem>
                </Sidebar>
                <MainPane>
                  <PageTitle>
                    <TitleIcon>
                      <TitleGlyph />
                    </TitleIcon>
                    Create SAML Integration
                  </PageTitle>
                  <Wizard>
                    <WizardStep $w={658}>
                      <StepNum>1</StepNum>General Settings
                    </WizardStep>
                    <WizardStep $w={659} $on>
                      <StepNum $on>2</StepNum>Configure SAML
                    </WizardStep>
                    <WizardStep $w={677} $shift={18}>
                      <StepNum>3</StepNum>Feedback
                    </WizardStep>
                  </Wizard>
                  <Columns>
                    <Card>
                      <CardHead>
                        <CardLetter>A</CardLetter>
                        SAML Settings
                      </CardHead>
                      <SectionTitle>General</SectionTitle>
                      <FormGrid>
                        <LabelCell>
                          Single sign-on URL
                          <HelpDot>?</HelpDot>
                          <RedMark $l={-9} $t={39} width="302" height="13" viewBox="0 0 302 13">
                            <polygon points="0,2.5 302,0 302,10 0,13" fill="#ee4026" />
                          </RedMark>
                        </LabelCell>
                        <FieldCell>
                          <TextBox>
                            <UrlClip>https://dev-unskript.us.auth0.com/login/callback?connection=okta</UrlClip>
                          </TextBox>
                          <CheckRow>
                            <CheckMark>
                              <Tick />
                            </CheckMark>
                            Use this for Recipient URL and Destination URL
                          </CheckRow>
                        </FieldCell>
                        <LabelCell>
                          Audience URI (SP Entity ID)
                          <HelpDot>?</HelpDot>
                          <RedMark $l={-7} $t={36} width="410" height="14" viewBox="0 0 410 14">
                            <polygon points="0,3 410,0 410,10 0,14" fill="#ee4026" />
                          </RedMark>
                        </LabelCell>
                        <FieldCell>
                          <TextBox>urn:auth0:dev-unskript:okta-dev-saml</TextBox>
                        </FieldCell>
                        <LabelCell>
                          Default RelayState
                          <HelpDot>?</HelpDot>
                        </LabelCell>
                        <FieldCell>
                          <TextBox />
                          <Hint>If no value is set, a blank RelayState is sent</Hint>
                        </FieldCell>
                        <LabelCell>
                          Name ID format
                          <HelpDot>?</HelpDot>
                        </LabelCell>
                        <FieldCell>
                          <SelectBox>
                            Unspecified
                            <SelectArrow />
                          </SelectBox>
                        </FieldCell>
                        <LabelCell>
                          Application username
                          <HelpDot>?</HelpDot>
                        </LabelCell>
                        <FieldCell>
                          <SelectBox>
                            Okta username
                            <SelectArrow />
                          </SelectBox>
                        </FieldCell>
                      </FormGrid>
                    </Card>
                    <HelpAside>
                      <HelpTitle $gap={0}>What does this form do?</HelpTitle>
                      <HelpText $gap={23}>
                        This form generates the XML needed
                        <br />
                        for the app's SAML request.
                      </HelpText>
                      <HelpTitle $gap={46}>
                        Where do I find the info this form
                        <br />
                        needs?
                      </HelpTitle>
                      <HelpText $gap={21}>
                        The app you're trying to integrate with
                        <br />
                        should have its own documentation on
                        <br />
                        using SAML. You'll need to find that
                        <br />
                        doc, and it should outline what
                        <br />
                        information you need to specify in this
                        <br />
                        form.
                      </HelpText>
                    </HelpAside>
                  </Columns>
                </MainPane>
              </Body>
            </Content>
          </Window>
        </Desktop>
      </Page>
    </>
  );
}
